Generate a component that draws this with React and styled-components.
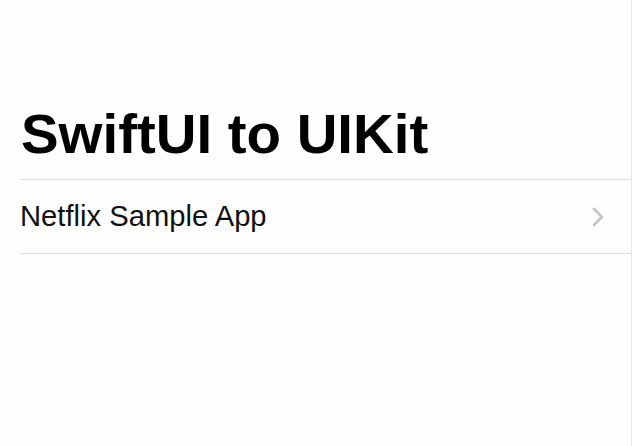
import React from "react";
import styled, { createGlobalStyle } from "styled-components";

const GlobalStyle = createGlobalStyle`
  html, body {
    margin: 0;
    padding: 0;
    background: #fefefe;
  }
  body {
    font-family: "Liberation Sans", Arial, sans-serif;
    color: #000;
  }
`;

const rows = ["Netflix Sample App"];

const App = () => {
  return (
    <>
      <GlobalStyle />
      <Screen>
        <Title>SwiftUI to UIKit</Title>
        <List>
          {rows.map((label) => (
            <Row key={label}>
              <Label>{label}</Label>
              <Chevron viewBox="0 0 12 20" aria-hidden="true">
                <path d="M2 2 L10 10 L2 18" />
              </Chevron>
            </Row>
          ))}
        </List>
      </Screen>
    </>
  );
};

//STYLING

const Screen = styled.div`
  box-sizing: border-box;
  width: 632px;
  height: 446px;
  padding: 106px 0 0 20px;
  border-right: 1px solid #e8e8f0;
  background: #fefefe;
`;

const Title = styled.h1`
  margin: 0 0 17px 1px;
  font-size: 56.4px;
  line-height: 56px;
  font-weight: 700;
`;

const List = styled.div`
  border-top: 1px solid #dcdcdc;
`;

const Row = styled.div`
  display: flex;
  align-items: center;
  justify-content: space-between;
  height: 73px;
  padding-right: 27px;
  border-bottom: 1px solid #dcdcdc;
`;

const Label = styled.span`
  font-size: 29.2px;
  line-height: 1;
  color: #111;
`;

const Chevron = styled.svg`
  width: 12px;
  height: 20px;
  fill: none;
  stroke: #c4c4c8;
  stroke-width: 2.6;
  stroke-linecap: round;
  stroke-linejoin: round;
`;

export default App;
